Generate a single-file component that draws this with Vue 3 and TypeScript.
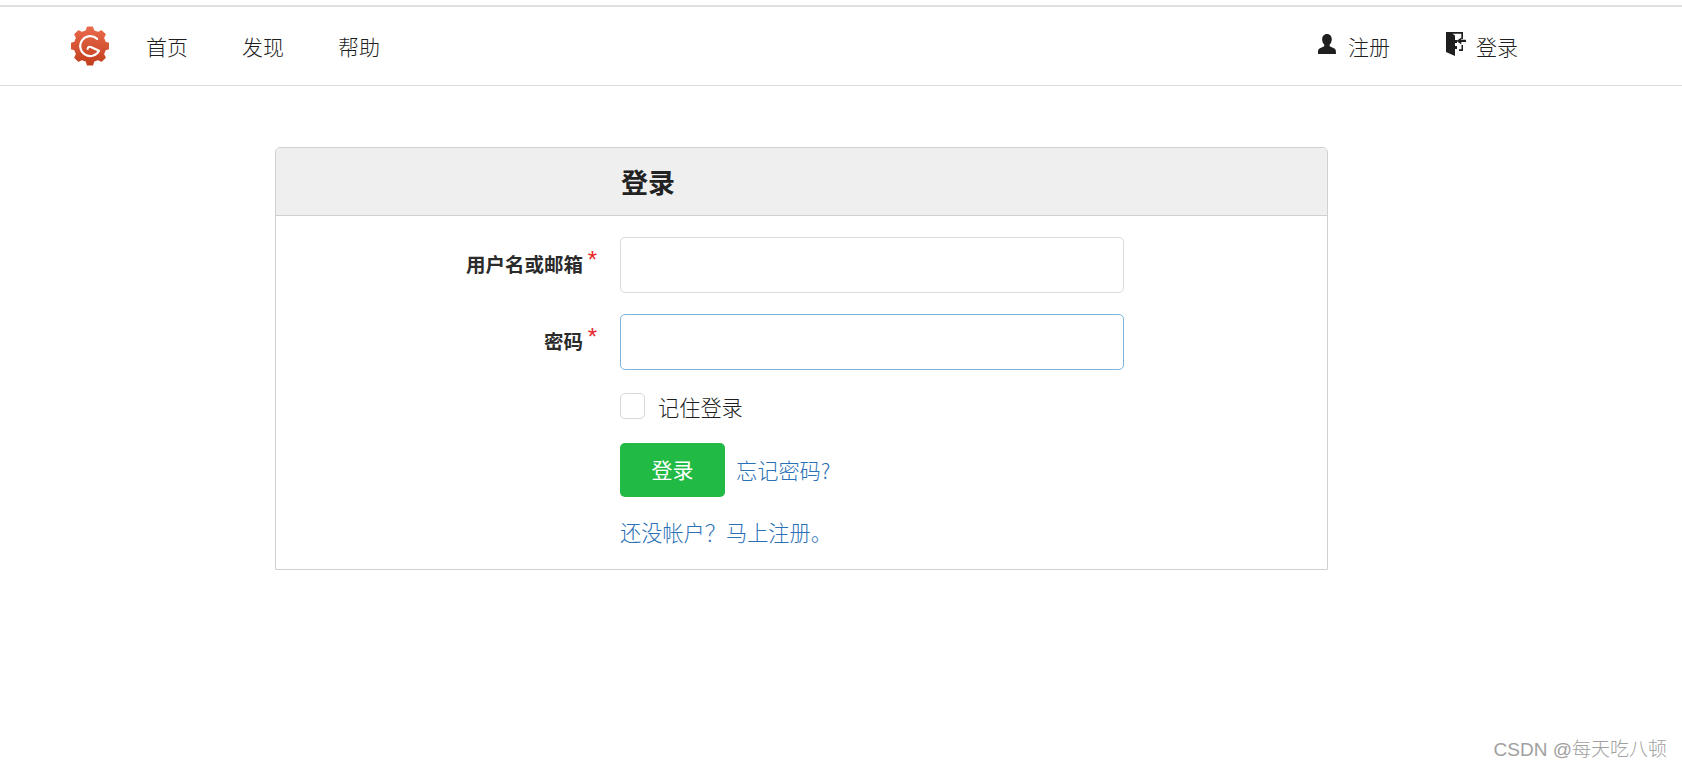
<script setup lang="ts">
const navItems: string[] = ['首页', '发现', '帮助']

// Eight-toothed gear outline around the centre of a 40x40 box.
function gearPath(): string {
  const teeth = 8
  const outer = 20
  const inner = 16.4
  const pts: string[] = []
  for (let i = 0; i < teeth; i++) {
    const a = (i * 2 * Math.PI) / teeth
    const step = (2 * Math.PI) / teeth
    const angles: [number, number][] = [
      [a - step * 0.3, inner],
      [a - step * 0.17, outer],
      [a + step * 0.17, outer],
      [a + step * 0.3, inner]
    ]
    for (const [t, r] of angles) {
      pts.push(`${(20 + r * Math.sin(t)).toFixed(2)} ${(20 - r * Math.cos(t)).toFixed(2)}`)
    }
  }
  return 'M' + pts.join('L') + 'Z'
}
const gear = gearPath()
</script>

<template>
  <div class="page">
    <header class="nav">
      <svg class="logo" viewBox="0 0 40 40" aria-hidden="true">
        <defs>
          <linearGradient id="lg" x1="0" y1="0" x2="0" y2="1">
            <stop offset="0" stop-color="#e96a4c" />
            <stop offset="1" stop-color="#c23f1c" />
          </linearGradient>
        </defs>
        <path fill="url(#lg)" stroke="url(#lg)" stroke-width="1.500" stroke-linejoin="round" :d="gear" />
        <path d="M27.500 12.500A10.500 10.500 0 1 0 29.500 25L21.500 21.300Q18 19.800 17.500 23" fill="none" stroke="#fff" stroke-width="2.300" stroke-linecap="round" stroke-linejoin="round" />
      </svg>
      <a v-for="item in navItems" :key="item" class="nav-link">{{ item }}</a>
      <div class="spacer"></div>
      <a class="nav-link right reg">
        <svg class="icon user" viewBox="0 0 18 21" aria-hidden="true">
          <path fill="#1f1f1f" d="M9 0c3 0 4.800 2.300 4.800 5.300 0 2.100-.9 4-2 5.200-.5.700-.4 1.500.3 1.900l3.800 1.900c1.300.7 2 1.800 2 3.200V20H0v-2.500c0-1.400.7-2.500 2-3.200l3.800-1.900c.7-.4.800-1.200.3-1.900-1.100-1.200-2-3.100-2-5.200C4.200 2.300 6 0 9 0z" />
        </svg>
        注册
      </a>
      <a class="nav-link right login">
        <svg class="icon door" viewBox="0 0 20 24" aria-hidden="true">
          <path fill="#1f1f1f" d="M0 0h17v7h-1.700V1.700H6.500L9 3.500V8h2v3H9v3h2v3H9v7L0 20z" />
          <path fill="#1f1f1f" d="M15.300 12.500v-2.500H20V7.800h-4.700V5.500L10.500 9z M15.500 13H17v6h-4v-1.700h2.500z" />
        </svg>
        登录
      </a>
    </header>

    <main class="card">
      <div class="card-head"><h3>登录</h3></div>
      <form class="card-body" @submit.prevent>
        <div class="row">
          <label class="label"><b>用户名或邮箱</b><i>*</i></label>
          <div class="input"></div>
        </div>
        <div class="row">
          <label class="label"><b>密码</b><i>*</i></label>
          <div class="input focus"></div>
        </div>
        <div class="row check">
          <span class="box"></span>
          <span class="check-text">记住登录</span>
        </div>
        <div class="row actions">
          <button class="btn" type="button">登录</button>
          <a class="link">忘记密码?</a>
        </div>
        <div class="row signup">
          <a class="link">还没帐户？马上注册。</a>
        </div>
      </form>
    </main>

    <div class="mark">CSDN @每天吃八顿</div>
  </div>
</template>

<style>
html, body { margin: 0; background: #fff; overflow: hidden; }
</style>

<style scoped>
.page {
  position: relative;
  height: 770px;
  padding-top: 5px;
  box-sizing: border-box;
  font-family: "Noto Sans CJK SC", "Liberation Sans", sans-serif;
  color: #2b2b2b;
  overflow: hidden;
}
.nav {
  height: 78px;
  border-top: 2px solid #e0e0e0;
  border-bottom: 1px solid #dedede;
  display: flex;
  align-items: center;
  padding-left: 71px;
  padding-right: 164px;
}
.logo { width: 38px; height: 40px; margin-right: 37px; margin-top: -1px; }
.nav-link {
  font-size: 21px;
  line-height: 28px;
  margin-right: 54px;
  font-weight: 300;
  white-space: nowrap;
  color: #1f1f1f;
}
.spacer { flex: 1; }
.nav-link.right { display: flex; align-items: center; }
.nav-link.reg { margin-right: 56px; }
.nav-link.login { margin-right: 0; }
.icon.user { width: 18px; height: 21px; margin-right: 12px; margin-top: -3px; }
.icon.door { width: 20px; height: 24px; margin-right: 10px; margin-top: -5px; }

.card {
  width: 1053px;
  height: 423px;
  box-sizing: border-box;
  margin: 61px 0 0 275px;
  border: 1px solid #d0d0d0;
  border-radius: 5px 5px 0 0;
}
.card-head {
  height: 67px;
  background: #efefef;
  border-bottom: 1px solid #d0d0d0;
  border-radius: 4px 4px 0 0;
  padding-left: 345px;
  display: flex;
  align-items: center;
}
.card-head h3 {
  margin: 0;
  font-size: 27px;
  font-weight: 700;
  color: #222;
}
.card-body { padding: 21px 0 0 344px; }
.row { display: flex; align-items: center; }
.row + .row { margin-top: 21px; }
.label {
  width: 344px;
  margin-left: -344px;
  box-sizing: border-box;
  padding-right: 37px;
  display: flex;
  justify-content: flex-end;
  position: relative;
  font-size: 19.500px;
}
.label b { font-weight: 700; color: #2b2b2b; line-height: 28px; margin-top: -3px; }
.label i {
  position: absolute;
  right: 23px;
  top: -8px;
  font-style: normal;
  font-family: "Liberation Sans", sans-serif;
  font-weight: 400;
  font-size: 24px;
  line-height: 30px;
  color: #e8262a;
}
.input {
  width: 504px;
  height: 56px;
  box-sizing: border-box;
  border: 1px solid #dcdcdc;
  border-radius: 5px;
  background: #fff;
}
.input.focus { border-color: #7db4d8; }
.row.check { height: 26px; margin-top: 23px; }
.box {
  width: 25px;
  height: 26px;
  box-sizing: border-box;
  border: 1px solid #d8d8d8;
  border-radius: 5px;
}
.check-text { margin-left: 13px; font-size: 21.200px; font-weight: 300; color: #1f1f1f; }
.row.actions { margin-top: 24px; }
.btn {
  width: 105px;
  height: 54px;
  border: 0;
  border-radius: 5px;
  background: #21ba45;
  color: #fff;
  font: 400 21px "Noto Sans CJK SC", sans-serif;
  padding: 0 0 2px;
}
.link { color: #2a70b5; font-size: 21.200px; font-weight: 300; white-space: nowrap; }
.actions .link { margin-left: 11px; margin-top: -2px; }
.row.signup { margin-top: 19px; }
.mark {
  position: absolute;
  right: 15px;
  bottom: 7px;
  font-family: "Liberation Sans", "Noto Sans CJK SC", sans-serif;
  font-size: 19px;
  line-height: 26px;
  color: #a0a0a0;
  font-weight: 300;
}
</style>
